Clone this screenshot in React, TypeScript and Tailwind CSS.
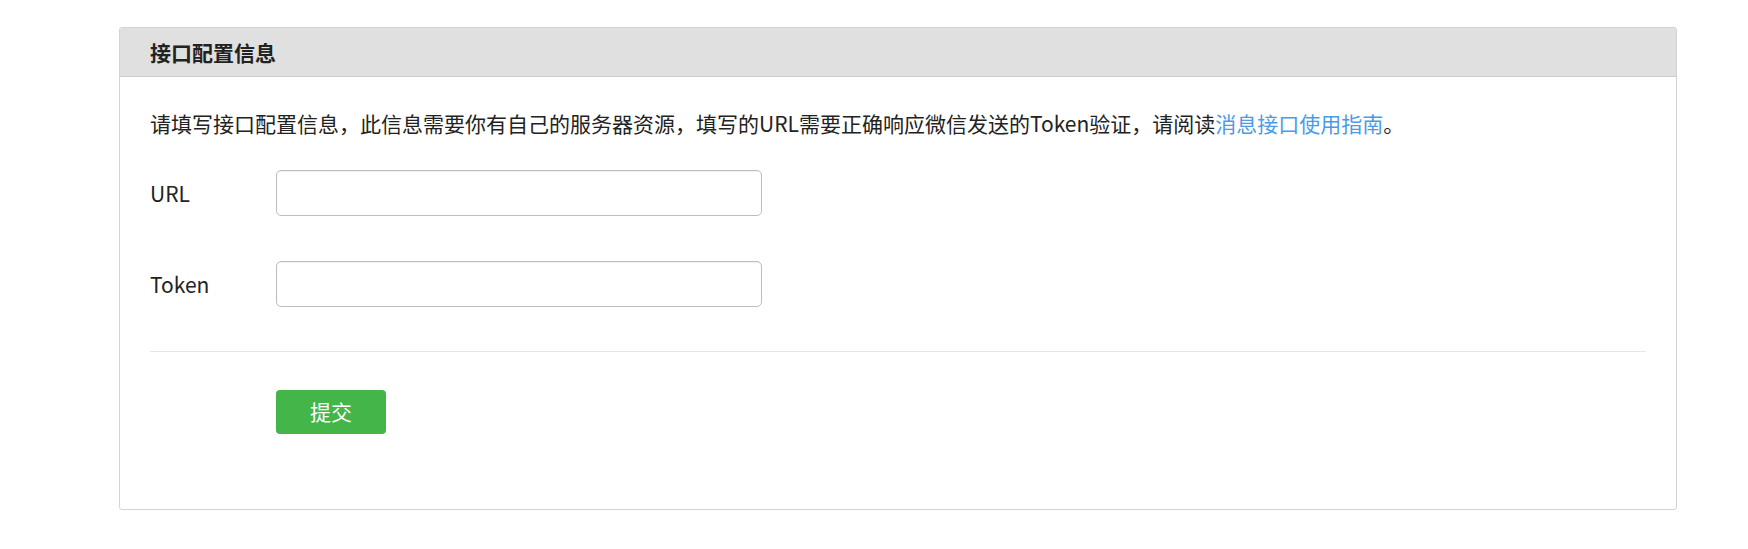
import React, { FC } from "react";

const font = { fontFamily: '"Noto Sans CJK SC", "Noto Sans", sans-serif' };

type FieldProps = {
  label: string;
  name: string;
};

const Field: FC<FieldProps> = ({ label, name }) => {
  return (
    <div className="flex items-center">
      <label className="w-[126px] text-[21px] leading-[32px] text-[#222]">{label}</label>
      <input
        type="text"
        name={name}
        className="w-[486px] h-[46px] rounded-[5px] border border-[#bdbdbd] bg-white px-3 text-[21px] outline-none shadow-[inset_0_1px_1px_rgba(0,0,0,0.06)]"
      />
    </div>
  );
};

const App: FC = () => {
  return (
    <div className="w-full bg-white pt-[27px] pl-[119px]" style={font}>
      <div className="w-[1558px] rounded-[3px] border border-[#d3d3d3] bg-white">
        {/* header */}
        <div className="h-[49px] flex items-center px-[30px] bg-[#e0e0e0] border-b border-[#cdcdcd]">
          <h2 className="text-[21px] font-bold text-[#222] leading-none">接口配置信息</h2>
        </div>

        <div className="px-[30px] pt-[30px] pb-[75px]">
          <p className="text-[21px] leading-[32px] text-[#222]">
            请填写接口配置信息，此信息需要你有自己的服务器资源，填写的URL需要正确响应微信发送的Token验证，请阅读
            <a className="text-[#4a9be8] cursor-pointer">消息接口使用指南</a>。
          </p>

          <div className="mt-[31px] flex flex-col gap-[45px]">
            <Field label="URL" name="url" />
            <Field label="Token" name="token" />
          </div>

          <div className="mt-[44px] h-px w-full bg-[#e6e6e6]" />

          <div className="mt-[38px] pl-[126px]">
            <button className="w-[110px] h-[44px] rounded-[4px] bg-[#44b549] text-white text-[21px] flex items-center justify-center">
              提交
            </button>
          </div>
        </div>
      </div>
    </div>
  );
};

export default App;
